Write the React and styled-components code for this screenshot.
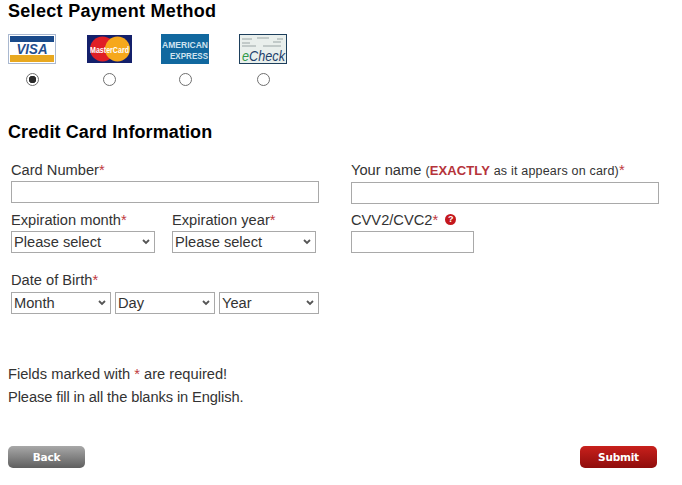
import React from 'react';
import styled, { createGlobalStyle } from 'styled-components';

const Global = createGlobalStyle`
  html, body { margin: 0; padding: 0; background: #fff; }
  body { font-family: "Liberation Sans", Arial, sans-serif; color: #333; }
`;

const chevron = `url("data:image/svg+xml,%3Csvg xmlns='http://www.w3.org/2000/svg' width='8' height='6'%3E%3Cpath d='M1 1l3 3 3-3' fill='none' stroke='%23555' stroke-width='1.8'/%3E%3C/svg%3E")`;

const Page = styled.div`
  width: 682px;
  height: 485px;
  padding: 0 8px;
  box-sizing: border-box;
  overflow: hidden;
`;

const Title = styled.h2`
  margin: 0;
  font-size: 18px;
  line-height: 22px;
  font-weight: bold;
  color: #000;
  letter-spacing: 0.3px;
`;

const Methods = styled.div`
  display: flex;
  margin-top: 12px;
`;

const Method = styled.label`
  display: flex;
  flex-direction: column;
  align-items: center;
  width: 48px;
  margin-right: ${p => p.$gap}px;
`;

const Logo = styled.svg`
  display: block;
  width: ${p => p.width}px;
  height: 30px;
`;

const Radio = styled.input`
  appearance: none;
  width: 13px;
  height: 13px;
  margin: 9px 0 0;
  border: 1px solid #6f6f6f;
  border-radius: 50%;
  background: #fff;
  box-sizing: border-box;
  &:checked {
    background: radial-gradient(circle, #2b2b2b 0 3.5px, #fff 4px);
  }
`;

const CardTitle = styled(Title)`
  margin-top: 35px;
  letter-spacing: 0.1px;
`;

const Form = styled.div`
  display: grid;
  grid-template-columns: 308px 308px;
  column-gap: 32px;
  margin: 18px 0 0 3px;
`;

const Column = styled.div`
  display: flex;
  flex-direction: column;
`;

const Row = styled.div`
  display: flex;
  gap: ${p => p.$gap || 0}px;
  margin-top: ${p => p.$top || 0}px;
`;

const Field = styled.div`
  display: flex;
  flex-direction: column;
  margin-top: ${p => p.$top || 0}px;
`;

const Label = styled.div`
  font-size: 14.67px;
  line-height: 18px;
  height: ${p => p.$h || 20}px;
  color: #333;
  white-space: nowrap;
`;

const Star = styled.span`
  color: #c0393d;
`;

const Exact = styled.b`
  color: #b5333a;
  font-size: 13px;
  letter-spacing: 0.1px;
`;

const Small = styled.span`
  font-size: 12.5px;
  letter-spacing: 0.2px;
`;

const Input = styled.input`
  width: ${p => p.$w}px;
  height: 22px;
  margin: 0;
  padding: 0 4px;
  border: 1px solid #a9a9a9;
  box-sizing: border-box;
  background: #fff;
  outline: none;
`;

const Select = styled.select`
  appearance: none;
  width: ${p => p.$w}px;
  height: 22px;
  margin: 0;
  padding: 0 16px 0 2px;
  border: 1px solid #a9a9a9;
  border-radius: 0;
  box-sizing: border-box;
  background: #fff ${chevron} no-repeat right 4px center;
  color: #333;
  font-family: "Liberation Sans", Arial, sans-serif;
  font-size: 14.67px;
`;

const Help = styled.span`
  display: inline-flex;
  align-items: center;
  justify-content: center;
  width: 11px;
  height: 11px;
  margin-left: 7px;
  border-radius: 50%;
  background: #c4171d;
  color: #fff;
  font-size: 9px;
  font-weight: bold;
  line-height: 11px;
  vertical-align: 3px;
`;

const Notes = styled.div`
  margin-top: 49px;
  font-size: 14.67px;
  line-height: 23px;
  color: #333;
`;

const NoteTight = styled.div`
  letter-spacing: -0.1px;
`;

const Actions = styled.div`
  display: flex;
  justify-content: space-between;
  width: 649px;
  margin-top: 37px;
`;

const Button = styled.button`
  width: 77px;
  height: 22px;
  padding: 0;
  border: 0;
  border-radius: 5px;
  background: ${p => p.$red
    ? 'linear-gradient(#c8201c, #8f0d0c)'
    : 'linear-gradient(#a8a8a8, #5f5f5f)'};
  color: #fff;
  font-family: "DejaVu Sans", Verdana, sans-serif;
  font-size: 10.5px;
  font-weight: bold;
  letter-spacing: -0.2px;
`;

const Visa = () => (
  <Logo width={48} viewBox="0 0 48 30">
    <rect x="0.5" y="0.5" width="47" height="29" fill="#fff" stroke="#a9b8d0" />
    <rect x="2" y="2" width="44" height="6" fill="#1a4a8a" />
    <rect x="2" y="21" width="44" height="7" fill="#e8a820" />
    <text x="24" y="19.5" textAnchor="middle" fontFamily="Liberation Sans" fontWeight="bold" fontStyle="italic" fontSize="14" textLength="31" lengthAdjust="spacingAndGlyphs" fill="#1f4e8f">VISA</text>
  </Logo>
);

const MasterCard = () => (
  <Logo width={45} viewBox="0 0 45 30">
    <rect y="1" width="45" height="28" fill="#14206b" />
    <circle cx="15.5" cy="15" r="12.5" fill="#e01f26" />
    <circle cx="30.5" cy="15" r="12.5" fill="#f6a81c" />
    <text x="3" y="18.5" fontFamily="Liberation Sans" fontWeight="bold" fontSize="8.5" textLength="39" lengthAdjust="spacingAndGlyphs" fill="#fff">MasterCard</text>
  </Logo>
);

const Amex = () => (
  <Logo width={48} viewBox="0 0 48 30">
    <rect width="48" height="30" fill="#11689f" />
    <text x="1" y="14" fontFamily="Liberation Sans" fontWeight="bold" fontSize="8.2" textLength="46" lengthAdjust="spacingAndGlyphs" fill="#cfe3f0">AMERICAN</text>
    <text x="9" y="24.5" fontFamily="Liberation Sans" fontWeight="bold" fontSize="8.2" textLength="38" lengthAdjust="spacingAndGlyphs" fill="#cfe3f0">EXPRESS</text>
  </Logo>
);

const ECheck = () => (
  <Logo width={48} viewBox="0 0 48 30">
    <rect x="0.5" y="0.5" width="47" height="29" fill="#e9efec" stroke="#1d3f5c" />
    <path d="M3 5h10M18 4h12M38 5h6M3 9h8M34 8h8M3 12h14M24 12h18" stroke="#9aa5a5" strokeWidth="1" />
    <text x="3" y="26.5" fontFamily="Liberation Sans" fontStyle="italic" fontSize="15" textLength="43" lengthAdjust="spacingAndGlyphs" fill="#1d3f6b">
      <tspan fill="#2f9a48">e</tspan>Check
    </text>
  </Logo>
);

const methods = [
  { Icon: Visa, gap: 29 },
  { Icon: MasterCard, gap: 28 },
  { Icon: Amex, gap: 30 },
  { Icon: ECheck, gap: 0 },
];

export default function App() {
  return (
    <Page>
      <Global />
      <Title>Select Payment Method</Title>
      <Methods>
        {methods.map(({ Icon, gap }, i) => (
          <Method key={i} $gap={gap}>
            <Icon />
            <Radio type="radio" name="method" defaultChecked={i === 0} />
          </Method>
        ))}
      </Methods>

      <CardTitle>Credit Card Information</CardTitle>
      <Form>
        <Column>
          <Field>
            <Label>Card Number<Star>*</Star></Label>
            <Input $w={308} />
          </Field>
          <Row $gap={17} $top={8}>
            <Field>
              <Label>Expiration month<Star>*</Star></Label>
              <Select $w={144}><option>Please select</option></Select>
            </Field>
            <Field>
              <Label>Expiration year<Star>*</Star></Label>
              <Select $w={144}><option>Please select</option></Select>
            </Field>
          </Row>
          <Field $top={18}>
            <Label $h={21}>Date of Birth<Star>*</Star></Label>
            <Row $gap={4}>
              <Select $w={100}><option>Month</option></Select>
              <Select $w={100}><option>Day</option></Select>
              <Select $w={100}><option>Year</option></Select>
            </Row>
          </Field>
        </Column>
        <Column>
          <Field>
            <Label $h={21}>Your name <Small>(<Exact>EXACTLY</Exact> as it appears on card)</Small><Star>*</Star></Label>
            <Input $w={308} />
          </Field>
          <Field $top={7}>
            <Label>CVV2/CVC2<Star>*</Star><Help>?</Help></Label>
            <Input $w={123} />
          </Field>
        </Column>
      </Form>

      <Notes>
        <div>Fields marked with <Star>*</Star> are required!</div>
        <NoteTight>Please fill in all the blanks in English.</NoteTight>
      </Notes>

      <Actions>
        <Button>Back</Button>
        <Button $red>Submit</Button>
      </Actions>
    </Page>
  );
}
